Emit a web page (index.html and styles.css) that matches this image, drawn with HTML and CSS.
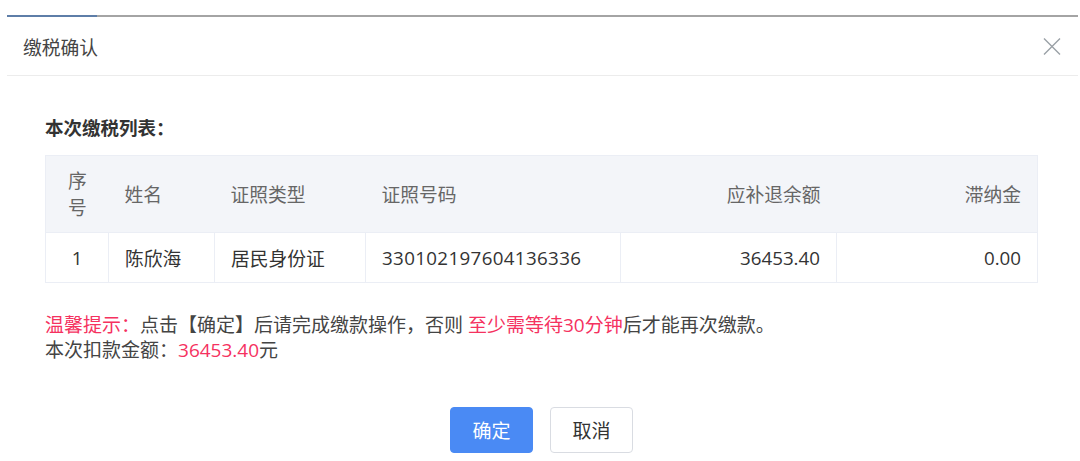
FILE: index.html
```html
<!DOCTYPE html>
<html lang="zh-CN">
<head>
    <meta charset="UTF-8">
    <title>缴税确认</title>
    <link rel="stylesheet" href="styles.css">
</head>
<body>
    <div class="dialog">
        <div class="top-bar"></div>
        <div class="dialog-header">
            <span class="dialog-title">缴税确认</span>
            <svg class="close-icon" width="18" height="17" viewBox="0 0 18 17">
                <path d="M1 0.5 L17 16.5 M17 0.5 L1 16.5" stroke="#9aa0a6" stroke-width="1.4" fill="none"/>
            </svg>
        </div>
        <div class="dialog-body">
            <div class="list-title">本次缴税列表：</div>
            <table class="tax-table">
                <thead>
                    <tr>
                        <th class="col-no">序号</th>
                        <th class="col-name">姓名</th>
                        <th class="col-type">证照类型</th>
                        <th class="col-id">证照号码</th>
                        <th class="col-amount num">应补退余额</th>
                        <th class="col-fine num">滞纳金</th>
                    </tr>
                </thead>
                <tbody>
                    <tr>
                        <td class="col-no">1</td>
                        <td>陈欣海</td>
                        <td>居民身份证</td>
                        <td class="digits">330102197604136336</td>
                        <td class="num">36453.40</td>
                        <td class="num">0.00</td>
                    </tr>
                </tbody>
            </table>
            <div class="tips">
                <p><span class="red">温馨提示：</span>点击【确定】后请完成缴款操作，否则 <span class="red">至少需等待30分钟</span>后才能再次缴款。</p>
                <p>本次扣款金额：<span class="red">36453.40</span>元</p>
            </div>
        </div>
        <div class="dialog-footer">
            <button class="btn btn-primary">确定</button>
            <button class="btn">取消</button>
        </div>
    </div>
</body>
</html>
```

FILE: styles.css
```css
body, html {
    margin: 0;
    padding: 0;
    background-color: white;
    font-family: "Open Sans", "Noto Sans CJK SC", sans-serif;
    color: #333;
}
.dialog {
    margin: 15px 2px 0 7px;
}
.top-bar {
    height: 2px;
    background: linear-gradient(to right, #5e7ea8 0, #5e7ea8 90px, #a4a4a4 90px);
}
.dialog-header {
    height: 58px;
    display: flex;
    align-items: center;
    justify-content: space-between;
    padding: 0 17px 0 16px;
    border-bottom: 1px solid #ececec;
}
.dialog-title {
    font-size: 18.75px;
    color: #444;
}
.close-icon {
    display: block;
}
.dialog-body {
    padding: 0 40px 0 38px;
}
.list-title {
    font-size: 18.5px;
    font-weight: bold;
    margin-top: 38px;
    line-height: 28px;
    color: #333;
}
.tax-table {
    width: 100%;
    margin-top: 13px;
    border-collapse: collapse;
    font-size: 18.75px;
    border: 1px solid #ebeef5;
}
.tax-table th {
    background-color: #f3f5f9;
    color: #666;
    font-weight: normal;
    text-align: left;
    height: 77px;
    padding: 0 16px;
    line-height: 27px;
    box-sizing: border-box;
}
.tax-table td {
    height: 50px;
    padding: 0 16px;
    border: 1px solid #ebeef5;
    color: #333;
    box-sizing: border-box;
}
.tax-table .num {
    text-align: right;
}
.tax-table .digits {
    letter-spacing: 0.35px;
}
.col-no {
    width: 63px;
    text-align: center !important;
    padding: 0 20px !important;
}
.col-name { width: 106px; }
.col-type { width: 151px; }
.col-id { width: 255px; }
.col-amount { width: 216px; }
.tips {
    margin-top: 30px;
    font-size: 19px;
    color: #444;
}
.tips p {
    margin: 0;
    line-height: 25px;
}
.red {
    color: #f5325f;
}
.dialog-footer {
    display: flex;
    justify-content: center;
    gap: 17px;
    margin-top: 44px;
    padding-right: 2px;
}
.btn {
    width: 83px;
    height: 46px;
    border: 1px solid #d9dce2;
    border-radius: 4px;
    background-color: white;
    font-family: inherit;
    font-size: 19px;
    color: #333;
}
.btn-primary {
    background-color: #4a8af4;
    border-color: #4a8af4;
    color: white;
}
```
